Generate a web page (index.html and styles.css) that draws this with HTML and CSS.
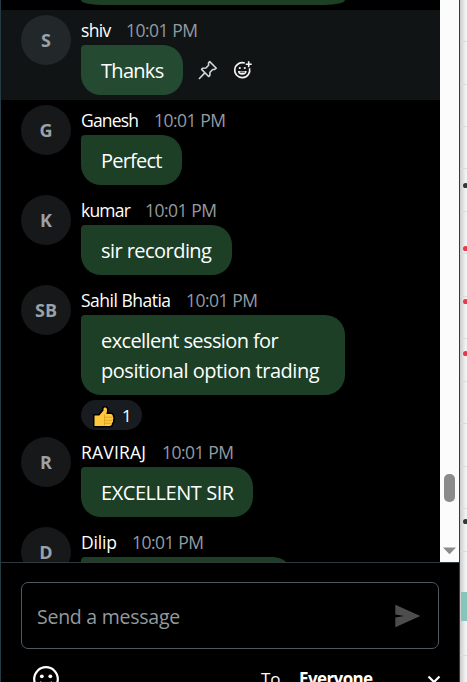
FILE: index.html
```html
<!DOCTYPE html>
<html lang="en">
  <head>
    <meta charset="UTF-8" />
    <meta name="viewport" content="width=device-width, initial-scale=1.0" />
    <title>Chat</title>
    <link rel="stylesheet" href="styles.css">
  </head>

  <body>
    <div class="app">
      <section class="panel">
        <div class="chat">
          <div class="messages">
            <div class="prev-bubble"></div>

            <div class="message hovered">
              <div class="avatar">S</div>
              <div class="content">
                <div class="meta"><span class="name shiv">shiv</span><span class="time">10:01 PM</span></div>
                <div class="line">
                  <div class="bubble thanks">Thanks</div>
                  <svg class="pin" width="20" height="20" viewBox="0 0 20 20">
                    <path d="M11.7 1.6 L18.3 8.2 L16.6 9.4 L14.7 9.5 L12 12.3 L11.8 15.6 L10.6 16.5 L3.6 9.4 L4.6 8.3 L7.9 8 L10.6 5.2 L10.5 3.1 Z M6.8 12.9 L1.4 18.5" />
                  </svg>
                  <svg class="react" width="20" height="20" viewBox="0 0 20 20">
                    <path d="M11.8 3.1 A7.5 7.5 0 1 0 16.5 8.2" />
                    <path d="M15.7 1.2 v6 M12.7 4.2 h6" />
                    <path class="fill" d="M5 11 h8.6 a4.3 3.8 0 0 1 -8.6 0z" />
                    <circle class="fill" cx="6.8" cy="8" r="1.1" />
                    <circle class="fill" cx="11.8" cy="8" r="1.1" />
                    <path class="mouth" d="M6.8 12.1 h5" />
                  </svg>
                </div>
              </div>
            </div>

            <div class="message">
              <div class="avatar">G</div>
              <div class="content">
                <div class="meta"><span class="name ganesh">Ganesh</span><span class="time">10:01 PM</span></div>
                <div class="bubble perfect">Perfect</div>
              </div>
            </div>

            <div class="message">
              <div class="avatar">K</div>
              <div class="content">
                <div class="meta"><span class="name kumar">kumar</span><span class="time">10:01 PM</span></div>
                <div class="bubble recording">sir recording</div>
              </div>
            </div>

            <div class="message">
              <div class="avatar">SB</div>
              <div class="content">
                <div class="meta"><span class="name sahil">Sahil Bhatia</span><span class="time">10:01 PM</span></div>
                <div class="bubble session"><span class="tight">excellent session for</span><br>positional option trading</div>
                <div class="reaction">
                  <svg width="22" height="22" viewBox="0 0 22 22">
                    <path class="outline" d="M1.5 9.5 h4.8 L10.5 4.5 V2.8 Q11 1 12.7 1.5 Q14.5 2 14 5 L13.4 8 H18 Q20 8.5 19.8 10.3 Q21 12 20 14 Q20.5 16 19 17 Q19 20 16.5 20 H1.5z" />
                    <path class="thumb" d="M1.5 9.5 h4.8 L10.5 4.5 V2.8 Q11 1 12.7 1.5 Q14.5 2 14 5 L13.4 8 H18 Q20 8.5 19.8 10.3 Q21 12 20 14 Q20.5 16 19 17 Q19 20 16.5 20 H1.5z" />
                    <path class="crease" d="M11.5 8.5 V19.5 M11.5 11.3 h8 M11.5 14.3 h8 M11.5 17.2 h7" />
                  </svg>
                  <span>1</span>
                </div>
              </div>
            </div>

            <div class="message">
              <div class="avatar">R</div>
              <div class="content">
                <div class="meta"><span class="name raviraj">RAVIRAJ</span><span class="time">10:01 PM</span></div>
                <div class="bubble excellent">EXCELLENT SIR</div>
              </div>
            </div>

            <div class="message">
              <div class="avatar">D</div>
              <div class="content">
                <div class="meta"><span class="name dilip">Dilip</span><span class="time">10:01 PM</span></div>
                <div class="bubble last"></div>
              </div>
            </div>
          </div>

          <div class="scrollbar">
            <div class="thumb-bar"></div>
            <svg width="13" height="8" viewBox="0 0 13 8"><path d="M0 0.5 H13 L6.5 7.2z" /></svg>
          </div>
        </div>

        <div class="composer">
          <div class="input">
            <span class="placeholder">Send a message</span>
            <svg width="26" height="24" viewBox="0 0 26 24"><path d="M0.3 0.8 L25.3 12 L0.3 23.2 V13.5 L9 12 L0.3 10.5z" /></svg>
          </div>
          <div class="toolbar">
            <svg class="smile" width="28" height="28" viewBox="0 0 28 28">
              <circle class="ring" cx="14" cy="14" r="11.8" />
              <circle cx="9.8" cy="11.3" r="1.9" />
              <circle cx="18.3" cy="11.3" r="1.9" />
              <path class="ring" d="M8 17 q6 6 12 0" />
            </svg>
            <span class="to">To</span>
            <span class="everyone">Everyone</span>
            <svg class="chevron" width="14" height="10" viewBox="0 0 14 10"><path d="M1.5 1.5 L7 7 L12.5 1.5" /></svg>
          </div>
        </div>
      </section>

      <!-- edge of the chart behind the chat window -->
      <svg class="chart" width="7" height="682" viewBox="0 0 7 682">
        <path class="grid" d="M0 41.5h7M0 84.5h7M0 126.5h7M0 168.5h7M0 211.5h7M0 253.5h7M0 296.5h7M0 338.5h7M0 381.5h7M0 423.5h7M0 466.5h7M0 508.5h7M0 551.5h7M0 593.5h7M0 655.5h7" />
        <rect class="teal" x="1" y="592" width="6" height="29" />
        <circle class="dark" cx="5.6" cy="185.5" r="2.6" />
        <circle class="red" cx="5.6" cy="248.5" r="2.6" />
        <circle class="red" cx="5.6" cy="301.5" r="2.6" />
        <circle class="red" cx="5.6" cy="353.5" r="2.6" />
        <circle class="dark" cx="5.6" cy="521.5" r="2.6" />
      </svg>
    </div>
  </body>
</html>
```
FILE: styles.css
```css
* {
  box-sizing: border-box;
}

html,
body {
  height: 100%;
  margin: 0;
  overflow: hidden;
  background: #000;
  font-family: "Segoe UI", "Open Sans", "Noto Sans", sans-serif;
}

svg {
  display: block;
  flex: none;
}

.app {
  display: flex;
  width: 467px;
  height: 682px;
  overflow: hidden;
}

.panel {
  width: 460px;
  height: 682px;
  flex: none;
  overflow: hidden;
  border-left: 1px solid #263a44;
  border-right: 1px solid #263f4b;
}

.chat {
  display: flex;
  height: 563px;
  border-bottom: 1px solid #30383d;
}

.messages {
  width: 439px;
  overflow: hidden;
}

.prev-bubble {
  width: 264px;
  height: 5px;
  margin: 0 0 5px 80px;
  background: #1c3f26;
  border-radius: 0 0 20px 20px / 0 0 5px 5px;
}

.message {
  display: flex;
  gap: 10px;
  padding: 5px 0 5px 20px;
}

.message.hovered {
  background: #101414;
}

.avatar {
  width: 50px;
  height: 50px;
  flex: none;
  border-radius: 50%;
  background: #161819;
  color: #9ba1a7;
  font-size: 18px;
  font-weight: 700;
  line-height: 51px;
  text-align: center;
}

.hovered .avatar {
  background: #22272a;
}

.meta {
  display: flex;
  gap: 16px;
  height: 30px;
  font-size: 17.5px;
  line-height: 31px;
  white-space: nowrap;
}

.name {
  color: #fff;
}

.shiv {
  width: 29px;
  letter-spacing: -0.7px;
}

.ganesh {
  width: 57px;
  letter-spacing: -0.8px;
}

.kumar {
  width: 48px;
  letter-spacing: -0.8px;
}

.sahil {
  width: 89px;
  letter-spacing: -0.5px;
}

.raviraj {
  width: 65px;
  letter-spacing: 0.2px;
}

.dilip {
  width: 35px;
  letter-spacing: -0.2px;
}

.time {
  color: #939ba2;
  letter-spacing: -0.5px;
}

.line {
  display: flex;
  align-items: center;
}

.bubble {
  height: 50px;
  padding: 10px 0 10px 20px;
  border-radius: 4px 20px 20px 20px;
  background: #1c3f26;
  color: #fff;
  font-size: 20px;
  letter-spacing: -0.45px;
  line-height: 32px;
  white-space: nowrap;
}

.hovered .bubble {
  background: #244b31;
}

.thanks {
  width: 102px;
  letter-spacing: -0.7px;
}

.perfect {
  width: 101px;
  letter-spacing: -0.8px;
}

.recording {
  width: 151px;
  letter-spacing: -0.55px;
}

.session {
  width: 264px;
  height: 80px;
  padding-top: 11px;
  line-height: 30px;
}

.tight {
  letter-spacing: -0.6px;
}

.excellent {
  width: 172px;
}

.last {
  width: 212px;
}

.pin {
  margin-left: 15px;
  fill: none;
  stroke: #cfd6dc;
  stroke-width: 1.6;
  stroke-linejoin: round;
  stroke-linecap: round;
}

.react {
  margin-left: 15px;
  fill: none;
  stroke: #f4f5f5;
  stroke-width: 1.6;
}

.react .fill {
  fill: #f4f5f5;
  stroke: none;
}

.react .mouth {
  stroke: #101414;
  stroke-width: 1;
}

.reaction {
  display: flex;
  align-items: center;
  gap: 7px;
  width: 61px;
  height: 30px;
  margin: 5px 0 -3px;
  padding-left: 12px;
  border-radius: 15px;
  background: #181b20;
  color: #fff;
  font-size: 17px;
}

.reaction svg {
  margin-top: 4px;
}

.outline {
  fill: #000;
  stroke: #000;
  stroke-width: 3;
}

.thumb {
  fill: #ffc83d;
}

.crease {
  fill: none;
  stroke: #d99a20;
  stroke-width: 0.8;
}

.scrollbar {
  display: flex;
  flex-direction: column;
  align-items: center;
  width: 19px;
  background: #fcfcfc;
}

.thumb-bar {
  width: 11px;
  height: 28px;
  margin: 474px 0 45px;
  flex: none;
  border-radius: 5px;
  background: #8b8b8b;
}

.scrollbar svg {
  fill: #8b8b8b;
}

.composer {
  padding: 19px 20px 0;
}

.input {
  display: flex;
  align-items: center;
  justify-content: space-between;
  height: 67px;
  padding: 0 17px 0 15px;
  border: 1px solid #4d5a64;
  border-radius: 7px;
}

.placeholder {
  padding-top: 2px;
  color: #929a9e;
  font-size: 19.5px;
  letter-spacing: -0.25px;
}

.input svg {
  fill: #4d4d4d;
}

.toolbar {
  display: flex;
  align-items: flex-start;
  padding: 16px 0 0 11px;
  color: #fff;
  font-size: 17px;
  line-height: 28px;
}

.smile {
  fill: #fff;
}

.ring {
  fill: none;
  stroke: #fff;
  stroke-width: 2.2;
}

.to {
  width: 38px;
  flex: none;
  margin-left: 201px;
}

.everyone {
  width: 128px;
  flex: none;
  font-weight: 700;
  letter-spacing: -0.6px;
}

.chevron {
  margin-top: 10px;
  fill: none;
  stroke: #fff;
  stroke-width: 2.2;
}

.chart {
  background: linear-gradient(to right, #cbcbcb, #f2f2f2 80%);
}

.grid {
  stroke: #dcdcdc;
}

.teal {
  fill: #86c5bd;
}

.dark {
  fill: #343641;
}

.red {
  fill: #e8394a;
}
```
